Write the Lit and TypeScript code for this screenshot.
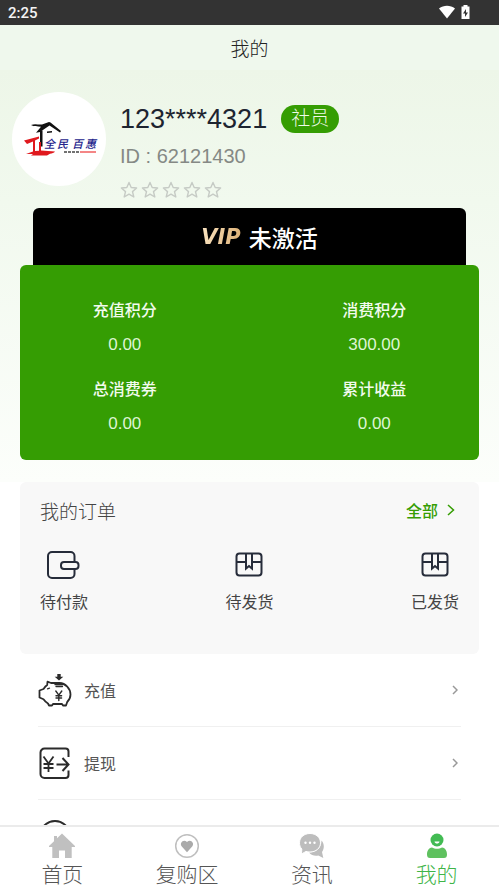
import { LitElement, html, css, svg } from "lit";
import { customElement, state } from "lit/decorators.js";
import { classMap } from "lit/directives/class-map.js";

const wallet = svg`<svg viewBox="0 0 34 34" width="34" height="34" fill="none" stroke="#262c3a" stroke-width="2">
  <path d="M27.500 13V8a4 4 0 0 0-4-4H5a4 4 0 0 0-4 4V26a4 4 0 0 0 4 4h18.500a4 4 0 0 0 4-4V21"/>
  <rect x="14" y="14" width="17.500" height="7" rx="3"/>
</svg>`;

const parcel = svg`<svg viewBox="0 0 34 34" width="34" height="34" fill="none" stroke="#262c3a" stroke-width="2">
  <rect x="4.500" y="5.500" width="25" height="22" rx="3"/>
  <path d="M4.500 14H14M20 14h9.500M14 5.500v15l3-2.500 3 2.500v-15"/>
</svg>`;

const piggy = svg`<svg viewBox="0 0 34 34" width="34" height="34" fill="none" stroke="#2b2b2b" stroke-width="1.800" stroke-linejoin="round" stroke-linecap="round">
  <path d="M13 10 9.500 8.700l-.3 3.300C7.500 13 6.500 14.500 5.500 16L1.500 17.500v7l4 1.800c1 1.500 2.500 3 4.500 4.200l1 2h3l1-1.500h9l1 1.500h3l1.200-3.500c2-2 3.300-4.500 3.300-7.500 0-6-5-11.200-11-11.500z"/>
  <path d="M9.500 15.800l2-.6" stroke-width="1.300"/>
  <path d="M17 11.500h8M18 13.500h6.500" stroke-width="1.300"/>
  <path d="M17.800 18l3 4.200 3-4.200M20.800 22.200v5.300M18 22.800h5.600M18 25h5.600" stroke-width="1.400"/>
  <path d="M19.300 1h3.400v2.800h2.600L21 7.500l-4.300-3.700h2.600z" fill="#2b2b2b" stroke="none"/>
</svg>`;

const withdraw = svg`<svg viewBox="0 0 34 34" width="34" height="34" fill="none" stroke="#2b2b2b" stroke-width="2">
  <path d="M30.500 11V5.500a3 3 0 0 0-3-3H6.500a4 4 0 0 0-4 4V28a4 4 0 0 0 4 4h21a3 3 0 0 0 3-3v-4.500"/>
  <path d="M5.500 10.500l5 7 5-7M10.500 17.500V26M5.500 18h10M5.500 22h10" stroke-width="1.800"/>
  <path d="M18.500 18.500h12M24.500 12l6 6.500-6 6.500"/>
</svg>`;

const round = svg`<svg viewBox="0 0 34 34" width="34" height="34" fill="none" stroke="#2b2b2b" stroke-width="2">
  <circle cx="17" cy="17" r="15"/><path d="M17 9v8l6 4"/>
</svg>`;

const home = svg`<svg viewBox="0 0 28 26" width="28" height="26">
  <path fill="#c0c0c0" d="M14 .500 27 13v1h-3.300v11H17v-7.500h-6V25H4.300V14H1v-1L6 8.200V3h3v2.300z"/>
</svg>`;

const heart = svg`<svg viewBox="0 0 28 26" width="28" height="26">
  <circle cx="14" cy="13" r="11.300" fill="none" stroke="#bfbfbf" stroke-width="1.500"/>
  <path fill="#aaa" d="M14 19.200 8.800 13.500C6 10 10.500 5.500 14 9c3.500-3.500 8 1 5.200 4.500z"/>
</svg>`;

const chat = svg`<svg viewBox="0 0 28 26" width="28" height="26">
  <path fill="#bdbdbd" d="M23.500 7.500c3 3.500 3 8 .5 11.500l1.300 6-5-2.500c-3.500.7-7-.2-9.300-3 6.500 0 12.500-4.500 12.500-12z"/>
  <path fill="#bdbdbd" stroke="#fff" d="M12 .500c6 0 10.500 4 10.500 9.300S18 19 12 19c-1.400 0-2.700-.2-4-.6L3.500 21l.3-5C2.200 14.400 1.500 12.200 1.500 9.800 1.500 4.500 6 .500 12 .500z"/>
  <g fill="#fff"><circle cx="7.500" cy="9.800" r="1.200"/><circle cx="12" cy="9.800" r="1.200"/><circle cx="16.500" cy="9.800" r="1.200"/></g>
</svg>`;

const person = svg`<svg viewBox="0 0 28 26" width="28" height="26">
  <circle cx="14" cy="7" r="6.500" fill="#42bb53"/>
  <path fill="#5fc15f" d="M9 14.500c3 1.800 7 1.800 10 0 3.500.5 5 3.500 5 7 0 2.500-1 3.500-3 3.500H7c-2 0-3-1-3-3.500 0-3.500 1.500-6.500 5-7z"/>
  <path fill="#fff" d="M11.500 8.500h5c-.5 2.700-4.500 2.700-5 0z"/>
</svg>`;

const star = svg`<svg viewBox="0 0 18 18" width="18" height="18" fill="none" stroke="#c6cbc5" stroke-width="1.400" stroke-linejoin="round">
  <path d="M9 1.500l2.200 5 5.400.5-4.100 3.600 1.300 5.400L9 13.200 4.200 16l1.300-5.400L1.400 7l5.400-.5z"/>
</svg>`;

const logo = svg`<svg viewBox="0 0 94 94" width="94" height="94" role="img" aria-label="全民百惠">
  <path fill="#111" d="M19 33c4-1.500 8 0 11-.5l7-2.500 1.500.5 10.500 8.500-1 1.500-10.500-7L28 40l-4 .8 5-6c-4-.5-7 0-10-1.800z"/>
  <path fill="#111" d="M28 38.500h2.500v16H28zM35 39.500l5-.5v1.500l-5 .5z"/>
  <path fill="#e0191e" d="M12 48.500l15-4v2L23 48.500v10.500l4-.3V50h2v8.500l14 1c-1 1.500-3 2-5 2.300l-3 1.700H19l2-1.500h-7l7-2.500V49.500L15 52z"/>
  <g class="brand">
    <text x="32" y="56">全</text>
    <text x="45" y="56">民</text>
    <text x="60" y="56">百</text>
    <text x="73" y="56">惠</text>
  </g>
  <path d="M52 60h16" stroke="#444" stroke-width="1.300" stroke-dasharray="3 1"/>
  <path d="M68 60h16" stroke="#e44" stroke-width="1.300"/>
</svg>`;

const chevron = svg`<svg viewBox="0 0 8 12" width="8" height="12" fill="none" stroke="currentColor" stroke-width="1.500"><path d="M1 1l5.500 5L1 11"/></svg>`;

@customElement("app-root")
export class AppRoot extends LitElement {
  @state() private tab = 3;

  private points = [
    ["充值积分", "0.00"],
    ["消费积分", "300.00"],
    ["总消费券", "0.00"],
    ["累计收益", "0.00"],
  ];
  private orders = [
    { label: "待付款", icon: wallet },
    { label: "待发货", icon: parcel },
    { label: "已发货", icon: parcel },
  ];
  private menu = [
    { label: "充值", icon: piggy },
    { label: "提现", icon: withdraw },
    { label: "", icon: round },
  ];
  private tabs = [
    { label: "首页", icon: home },
    { label: "复购区", icon: heart },
    { label: "资讯", icon: chat },
    { label: "我的", icon: person },
  ];

  static styles = css`
    :host {
      display: flex;
      flex-direction: column;
      height: 100vh;
      overflow: hidden;
      background: #fff;
      color: #444;
      font-family: "Liberation Sans", "Noto Sans CJK SC", sans-serif;
      font-size: 16px;
    }
    * { box-sizing: border-box; }
    h1, h2, p, dl, dt, dd, ul { margin: 0; padding: 0; font-weight: 400; }
    ul { list-style: none; }
    button { border: 0; background: none; padding: 0; font: inherit; color: inherit; }
    a { color: inherit; text-decoration: none; }
    svg { display: block; flex: none; }

    .status {
      flex: none;
      display: flex;
      align-items: center;
      justify-content: space-between;
      height: 25px;
      padding: 0 28px 0 8px;
      background: #333;
      color: #f4f4f4;
      font: 500 15px Roboto, sans-serif;
    }
    .title {
      flex: none;
      height: 45px;
      line-height: 49px;
      text-align: center;
      font-size: 19px;
      font-weight: 300;
      color: #222;
      background: #eff8ed;
    }
    .scroll { flex: 1; min-height: 0; overflow: hidden; }
    .top {
      padding: 22px 20px;
      background: linear-gradient(#edf6e8, #f1f9ee 32%, #fcfefb);
    }
    .profile { display: flex; gap: 14px; height: 116px; margin-left: -8px; }
    .avatar { width: 94px; height: 94px; border-radius: 50%; background: #fff; }
    .brand { font: italic 500 11px "Noto Sans CJK SC", sans-serif; fill: #24248c; }
    .name { display: flex; align-items: center; gap: 14px; height: 54px; font-size: 27px; color: #1d2430; }
    .badge {
      height: 28px;
      padding: 0 10px;
      border-radius: 14px;
      line-height: 27px;
      font-size: 19px;
      font-weight: 300;
      background: #359d03;
      color: #f0fbea;
    }
    .uid { line-height: 20px; font-size: 20px; color: #858985; }
    .stars { display: flex; gap: 3px; margin-top: 15px; }
    .vip {
      display: flex;
      align-items: center;
      justify-content: center;
      gap: 8px;
      height: 57px;
      margin: 0 13px;
      padding-left: 20px;
      border-radius: 6px 6px 0 0;
      background: #000;
      color: #fff;
      font-size: 23px;
      font-weight: 500;
    }
    .mark {
      font: italic 700 21px "DejaVu Sans", sans-serif;
      background: linear-gradient(100deg, #fbe6c4, #dcae72);
      background-clip: text;
      color: transparent;
    }
    .points {
      display: grid;
      grid-template-columns: 1fr 1fr;
      gap: 11px 40px;
      padding: 29px 0 19px;
      border-radius: 6px;
      background: #359d03;
      text-align: center;
      line-height: 34px;
    }
    .points dt { color: #f2fbee; font-weight: 500; }
    .points dd { color: #def5d4; font-size: 17px; }

    .orders {
      display: flex;
      flex-direction: column;
      gap: 25px;
      min-height: 172px;
      margin: 0 20px;
      padding: 15px 20px;
      border-radius: 6px;
      background: #f8f8f8;
    }
    .head { display: flex; justify-content: space-between; align-items: center; height: 26px; }
    .head h2 { font-size: 19px; font-weight: 300; color: #444; }
    .all { display: flex; align-items: center; gap: 9px; margin-right: 4px; color: #359d03; font-weight: 500; }
    .states { display: flex; justify-content: space-between; }
    .order { display: flex; flex-direction: column; align-items: center; gap: 9px; line-height: 24px; }

    .menu { margin: 0 38px; }
    .row {
      display: flex;
      align-items: center;
      gap: 12px;
      width: 100%;
      height: 73px;
      border-bottom: 1px solid #f0f0f0;
      color: #555;
      text-align: left;
    }
    .row span { flex: 1; }
    .row .go { flex: none; color: #999; margin-right: 3px; }

    .tabs {
      flex: none;
      display: grid;
      grid-template-columns: repeat(4, 1fr);
      height: 68px;
      border-top: 2px solid #ebebeb;
      background: #fff;
    }
    .tab {
      display: flex;
      flex-direction: column;
      align-items: center;
      padding-top: 6px;
      font-size: 21px;
      font-weight: 300;
      line-height: 32px;
      color: #555;
    }
    .tab.on { color: #3fb548; }
  `;

  render() {
    return html`
      <div class="status">
        <span>2:25</span>
        <svg viewBox="0 0 32 16" width="32" height="16" fill="#fff" aria-hidden="true">
          <path d="M0 3.500C4.500-.300 11.500-.300 16 3.500L8 13.500z"/>
          <path fill-rule="evenodd" d="M24.500 0h4v1.500h2V14h-8V1.500h2zM27 4 24 8.500h2V12l3-4.500h-2z"/>
        </svg>
      </div>
      <h1 class="title">我的</h1>
      <main class="scroll">
        <section class="top">
          <div class="profile">
            <div class="avatar">${logo}</div>
            <div>
              <div class="name"><span>123****4321</span><span class="badge">社员</span></div>
              <p class="uid">ID : 62121430</p>
              <div class="stars">${[0, 1, 2, 3, 4].map(() => star)}</div>
            </div>
          </div>
          <div class="vip"><span class="mark">VIP</span><span>未激活</span></div>
          <dl class="points">
            ${this.points.map(([k, v]) => html`<div><dt>${k}</dt><dd>${v}</dd></div>`)}
          </dl>
        </section>
        <section class="orders">
          <div class="head">
            <h2>我的订单</h2>
            <a class="all" href="#orders">全部 ${chevron}</a>
          </div>
          <div class="states">
            ${this.orders.map((o) => html`<button class="order">${o.icon}<span>${o.label}</span></button>`)}
          </div>
        </section>
        <ul class="menu">
          ${this.menu.map(
            (m) => html`<li><button class="row">${m.icon}<span>${m.label}</span>
              <svg class="go" viewBox="0 0 6 10" width="6" height="10" fill="none" stroke="currentColor" stroke-width="1.500"><path d="M1 1l4 4-4 4"/></svg>
            </button></li>`
          )}
        </ul>
      </main>
      <nav class="tabs">
        ${this.tabs.map(
          (t, i) => html`<button class=${classMap({ tab: true, on: i === this.tab })} @click=${() => (this.tab = i)}>
            ${t.icon}<span>${t.label}</span>
          </button>`
        )}
      </nav>
    `;
  }
}
